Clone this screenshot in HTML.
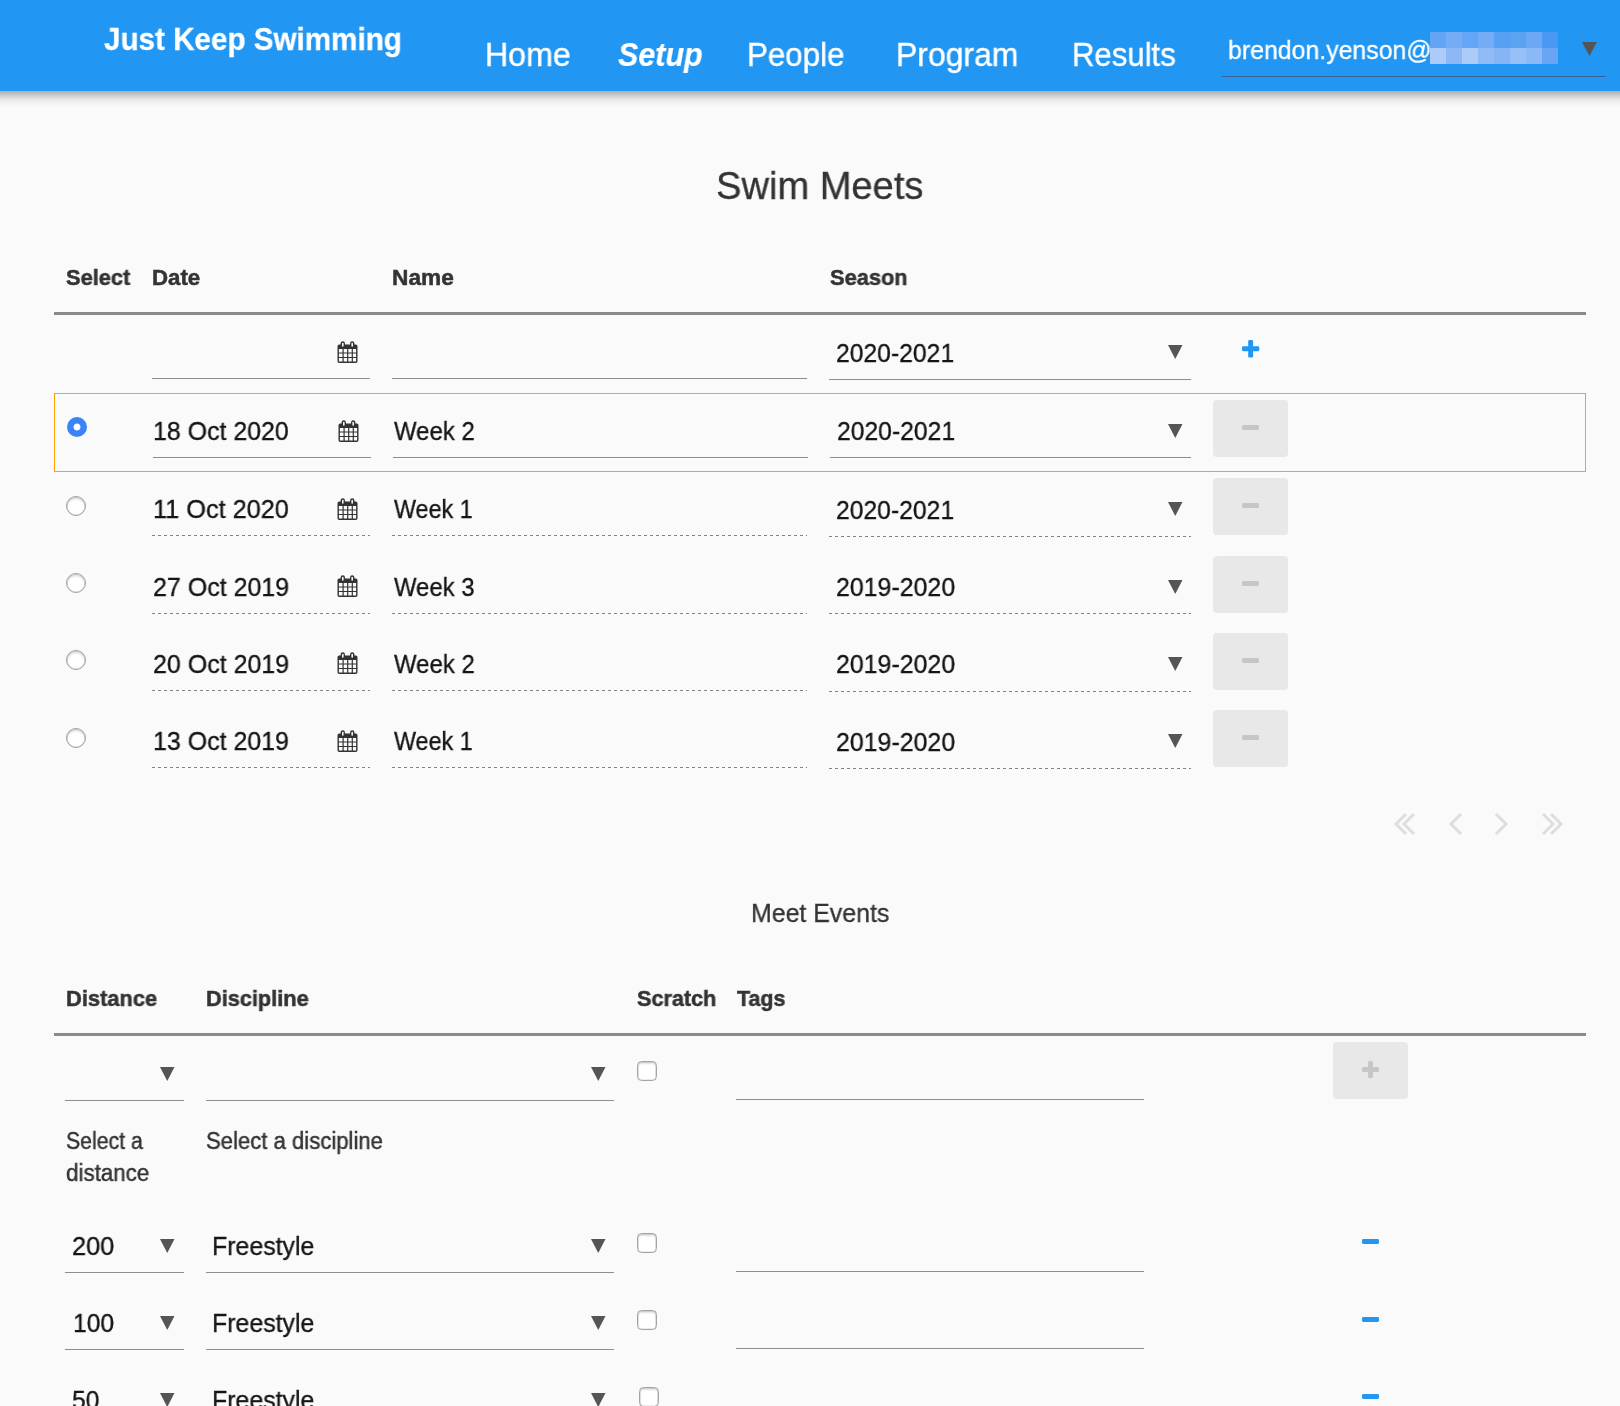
<!DOCTYPE html>
<html lang="en">
<head>
<meta charset="utf-8">
<title>Just Keep Swimming - Setup</title>
<style>
*{box-sizing:border-box;margin:0;padding:0}
html,body{width:1620px;height:1406px;overflow:hidden;background:#fafafa}
body{position:relative;font-family:"Liberation Sans",Arial,sans-serif;color:#212121}
.t,.ul,.dl,.hl,.btn,.rad,.chk,.minus,.sel,svg{position:absolute}
.t{white-space:nowrap;line-height:1;font-weight:normal;font-style:normal;transform-origin:0 0;will-change:transform}
header{position:absolute;left:0;top:0;width:1620px;height:91px;background:#2196f3;}
.shadow{position:absolute;left:0;top:91px;width:1620px;height:17px;background:linear-gradient(rgba(0,0,0,.275) 0,rgba(0,0,0,.27) 1.5px,rgba(0,0,0,.24) 2.5px,rgba(0,0,0,.176) 4.5px,rgba(0,0,0,.128) 6.5px,rgba(0,0,0,.08) 8.5px,rgba(0,0,0,.048) 10.5px,rgba(0,0,0,.028) 12.5px,rgba(0,0,0,.012) 14.5px,rgba(0,0,0,0) 17px)}
header .t{color:#fff;text-decoration:none}
.user{-webkit-text-stroke:.3px #fff}
.brand{-webkit-text-stroke:.3px #fff}
.brand{font-weight:bold}
nav a{-webkit-text-stroke:.4px #fff}
nav a.act{font-weight:bold;font-style:italic;-webkit-text-stroke:.2px #fff}
.px i{position:absolute;width:16px;height:16px}
.ul{height:1px;background:#8e8e8e}
.dl{height:1px;background:repeating-linear-gradient(90deg,#838383 0 3px,transparent 3px 6px)}
.hl{left:54px;width:1532px;height:3px;background:#8a8a8a}
h1.t,h2.t{color:#333;-webkit-text-stroke:.3px #333}
.th{font-weight:bold;color:#333;-webkit-text-stroke:.5px #333}
.td{color:#151515;-webkit-text-stroke:.35px #151515}
.hint{color:#333;-webkit-text-stroke:.45px #333}
.sel{left:54px;top:393px;width:1532px;height:79px;border:1px solid #ffa000}
.btn{width:75px;height:57px;background:#e8e8e8;border-radius:4px}
.btn i{position:absolute;left:29px;top:25px;width:17px;height:5px;border-radius:1.4px;background:#c6c6c6}
.btn b{position:absolute;left:35px;top:18px;width:5px;height:17px;border-radius:2px;background:#c6c6c6}
.btn.plus i{top:25px;border-radius:1.5px}
.btn.plus b{top:19px;border-radius:1.5px}
.rad{width:20px;height:20px;border-radius:50%;border:1px solid #a2a2a2;background:#fff;box-shadow:inset 0 0 0 .6px rgba(0,0,0,.18),inset 0 2px 2px rgba(0,0,0,.14)}
.rad.on{border:none;box-shadow:none;background:radial-gradient(circle at 50% 50%,#fff 0,#fff 3px,#3a84f7 3.9px)}
.chk{width:20px;height:20px;border:1px solid #a4a4a4;border-radius:4.5px;background:#fff;box-shadow:inset 0 0 0 .6px rgba(0,0,0,.16),inset 0 2px 2px rgba(0,0,0,.13)}
.minus{width:17px;height:5px;border-radius:1.4px;background:#2196f3}
svg{overflow:visible}
</style>
</head>
<body>
<header>
<div id="brand" class="t brand" style="left:103.93px;top:23.00px;font-size:32.2px;transform:scaleX(0.9201)">Just Keep Swimming</div>
<nav>
<a id="n1" class="t" style="left:484.61px;top:38.00px;font-size:33.4px;transform:scaleX(0.9621)">Home</a>
<a id="n2" class="t act" style="left:618.36px;top:38.00px;font-size:33.4px;transform:scaleX(0.9132)">Setup</a>
<a id="n3" class="t" style="left:746.90px;top:38.00px;font-size:33.4px;transform:scaleX(0.9365)">People</a>
<a id="n4" class="t" style="left:896.09px;top:38.00px;font-size:33.4px;transform:scaleX(0.9557)">Program</a>
<a id="n5" class="t" style="left:1071.53px;top:38.00px;font-size:33.4px;transform:scaleX(0.9313)">Results</a>
</nav>
<div class="userbox">
<div id="user" class="t user" style="left:1228.07px;top:37.00px;font-size:26.4px;transform:scaleX(0.9421)">brendon.yenson@</div>
<div class="px"><i style="left:1430px;top:32px;background:#64a4f4"></i><i style="left:1446px;top:32px;background:#74adf5"></i><i style="left:1462px;top:32px;background:#64a5f5"></i><i style="left:1478px;top:32px;background:#74adf6"></i><i style="left:1494px;top:32px;background:#58a0f3"></i><i style="left:1510px;top:32px;background:#5ca2f3"></i><i style="left:1526px;top:32px;background:#6ca9f5"></i><i style="left:1542px;top:32px;background:#4a98f3"></i><i style="left:1430px;top:48px;background:#accbf9"></i><i style="left:1446px;top:48px;background:#8cb8f7"></i><i style="left:1462px;top:48px;background:#abcbf9"></i><i style="left:1478px;top:48px;background:#90bbf7"></i><i style="left:1494px;top:48px;background:#86b5f6"></i><i style="left:1510px;top:48px;background:#98c0f8"></i><i style="left:1526px;top:48px;background:#8bb8f6"></i><i style="left:1542px;top:48px;background:#68a6f5"></i></div>
<div class="ul" style="left:1222px;top:76px;width:384px;background:#35618f"></div>
<svg style="left:1582px;top:42px" width="15" height="14" viewBox="0 0 15 14"><path d="M0 0h15L7.5 14z" fill="#555"/></svg>
</div>
</header>
<div class="shadow"></div>
<main>
<section class="meets">
<h1 id="h1" class="t" style="left:716.42px;top:166.00px;font-size:39.2px;transform:scaleX(0.9721)">Swim Meets</h1>
<div class="thead">
<div id="th1" class="t th" style="left:65.55px;top:267.00px;font-size:22px;transform:scaleX(0.9905)">Select</div>
<div id="th2" class="t th" style="left:151.92px;top:267.00px;font-size:22px;transform:scaleX(1.0102)">Date</div>
<div id="th3" class="t th" style="left:391.92px;top:267.00px;font-size:22px;transform:scaleX(1.0307)">Name</div>
<div id="th4" class="t th" style="left:829.70px;top:267.00px;font-size:22px;transform:scaleX(0.9916)">Season</div>
<div class="hl" style="top:312px"></div>
</div>
<div class="row" id="new">
<div id="news" class="t td" style="left:835.57px;top:340.00px;font-size:26.6px;transform:scaleX(0.9289)">2020-2021</div>
<svg class="cal" style="left:336.6px;top:341px" width="21" height="22" viewBox="0 0 21 22"><path fill="#333" fill-rule="evenodd" d="M2.2 3.6h16.6a1.7 1.7 0 0 1 1.7 1.7v15a1.7 1.7 0 0 1-1.7 1.7H2.2a1.7 1.7 0 0 1-1.7-1.7v-15a1.7 1.7 0 0 1 1.7-1.7zM1.9 8.1h3.6v3.3H1.9zM6.7 8.1h3.4v3.3H6.7zM11.3 8.1h3.4v3.3h-3.4zM15.9 8.1h3.2v3.3h-3.2zM1.9 12.5h3.6v3.4H1.9zM6.7 12.5h3.4v3.4H6.7zM11.3 12.5h3.4v3.4h-3.4zM15.9 12.5h3.2v3.4h-3.2zM1.9 17h3.6v3.5H1.9zM6.7 17h3.4v3.5H6.7zM11.3 17h3.4v3.5h-3.4zM15.9 17h3.2v3.5h-3.2z"/><rect x="3.6" y="0.3" width="4.4" height="6.6" rx="2.2" fill="#333"/><rect x="13" y="0.3" width="4.4" height="6.6" rx="2.2" fill="#333"/><rect x="5" y="1.8" width="1.6" height="3.9" rx=".8" fill="#fafafa"/><rect x="14.4" y="1.8" width="1.6" height="3.9" rx=".8" fill="#fafafa"/></svg>
<div class="ul" style="left:152px;top:378px;width:218px"></div>
<div class="ul" style="left:392px;top:378px;width:415px"></div>
<div class="ul" style="left:829px;top:379px;width:362px"></div>
<svg class="arr" style="left:1167.5px;top:345px" width="14.5" height="14" viewBox="0 0 14.5 14"><path d="M0 0h14.5L7.25 14z" fill="#555"/></svg>
<svg class="plus" style="left:1242px;top:340.4px" width="17.3" height="17.6" viewBox="0 0 17.3 17.6"><rect x="0" y="6.35" width="17.3" height="4.9" rx="1.4" fill="#2196f3"/><rect x="6.2" y="0" width="4.9" height="17.6" rx="1.4" fill="#2196f3"/></svg>
</div>
<div class="row" id="r2">
<div class="sel"></div>
<div class="rad on" style="left:67px;top:417px"></div>
<div id="r2d" class="t td" style="left:153.47px;top:418.00px;font-size:26.6px;transform:scaleX(0.9370)">18 Oct 2020</div>
<div id="r2n" class="t td" style="left:394.31px;top:418.00px;font-size:26.6px;transform:scaleX(0.8996)">Week 2</div>
<div id="r2s" class="t td" style="left:836.87px;top:418.00px;font-size:26.6px;transform:scaleX(0.9288)">2020-2021</div>
<svg class="cal" style="left:337.6px;top:420px" width="21" height="22" viewBox="0 0 21 22"><path fill="#333" fill-rule="evenodd" d="M2.2 3.6h16.6a1.7 1.7 0 0 1 1.7 1.7v15a1.7 1.7 0 0 1-1.7 1.7H2.2a1.7 1.7 0 0 1-1.7-1.7v-15a1.7 1.7 0 0 1 1.7-1.7zM1.9 8.1h3.6v3.3H1.9zM6.7 8.1h3.4v3.3H6.7zM11.3 8.1h3.4v3.3h-3.4zM15.9 8.1h3.2v3.3h-3.2zM1.9 12.5h3.6v3.4H1.9zM6.7 12.5h3.4v3.4H6.7zM11.3 12.5h3.4v3.4h-3.4zM15.9 12.5h3.2v3.4h-3.2zM1.9 17h3.6v3.5H1.9zM6.7 17h3.4v3.5H6.7zM11.3 17h3.4v3.5h-3.4zM15.9 17h3.2v3.5h-3.2z"/><rect x="3.6" y="0.3" width="4.4" height="6.6" rx="2.2" fill="#333"/><rect x="13" y="0.3" width="4.4" height="6.6" rx="2.2" fill="#333"/><rect x="5" y="1.8" width="1.6" height="3.9" rx=".8" fill="#fafafa"/><rect x="14.4" y="1.8" width="1.6" height="3.9" rx=".8" fill="#fafafa"/></svg>
<div class="ul" style="left:153px;top:457px;width:218px"></div>
<div class="ul" style="left:393px;top:457px;width:415px"></div>
<div class="ul" style="left:830px;top:457px;width:361px"></div>
<svg class="arr" style="left:1167.5px;top:424px" width="14.5" height="14" viewBox="0 0 14.5 14"><path d="M0 0h14.5L7.25 14z" fill="#555"/></svg>
<div class="btn" style="left:1213px;top:400px"><i></i></div>
</div>
<div class="row" id="r3">
<div class="rad" style="left:66px;top:496px"></div>
<div id="r3d" class="t td" style="left:152.53px;top:496.00px;font-size:26.6px;transform:scaleX(0.9510)">11 Oct 2020</div>
<div id="r3n" class="t td" style="left:393.52px;top:496.00px;font-size:26.6px;transform:scaleX(0.8761)">Week 1</div>
<div id="r3s" class="t td" style="left:835.57px;top:497.00px;font-size:26.6px;transform:scaleX(0.9289)">2020-2021</div>
<svg class="cal" style="left:336.6px;top:498px" width="21" height="22" viewBox="0 0 21 22"><path fill="#333" fill-rule="evenodd" d="M2.2 3.6h16.6a1.7 1.7 0 0 1 1.7 1.7v15a1.7 1.7 0 0 1-1.7 1.7H2.2a1.7 1.7 0 0 1-1.7-1.7v-15a1.7 1.7 0 0 1 1.7-1.7zM1.9 8.1h3.6v3.3H1.9zM6.7 8.1h3.4v3.3H6.7zM11.3 8.1h3.4v3.3h-3.4zM15.9 8.1h3.2v3.3h-3.2zM1.9 12.5h3.6v3.4H1.9zM6.7 12.5h3.4v3.4H6.7zM11.3 12.5h3.4v3.4h-3.4zM15.9 12.5h3.2v3.4h-3.2zM1.9 17h3.6v3.5H1.9zM6.7 17h3.4v3.5H6.7zM11.3 17h3.4v3.5h-3.4zM15.9 17h3.2v3.5h-3.2z"/><rect x="3.6" y="0.3" width="4.4" height="6.6" rx="2.2" fill="#333"/><rect x="13" y="0.3" width="4.4" height="6.6" rx="2.2" fill="#333"/><rect x="5" y="1.8" width="1.6" height="3.9" rx=".8" fill="#fafafa"/><rect x="14.4" y="1.8" width="1.6" height="3.9" rx=".8" fill="#fafafa"/></svg>
<div class="dl" style="left:152px;top:535px;width:218px"></div>
<div class="dl" style="left:392px;top:535px;width:415px"></div>
<div class="dl" style="left:829px;top:536px;width:362px"></div>
<svg class="arr" style="left:1167.5px;top:502px" width="14.5" height="14" viewBox="0 0 14.5 14"><path d="M0 0h14.5L7.25 14z" fill="#555"/></svg>
<div class="btn" style="left:1213px;top:478px"><i></i></div>
</div>
<div class="row" id="r4">
<div class="rad" style="left:66px;top:573px"></div>
<div id="r4d" class="t td" style="left:152.67px;top:574.00px;font-size:26.6px;transform:scaleX(0.9399)">27 Oct 2019</div>
<div id="r4n" class="t td" style="left:393.91px;top:574.00px;font-size:26.6px;transform:scaleX(0.8970)">Week 3</div>
<div id="r4s" class="t td" style="left:836.06px;top:574.00px;font-size:26.6px;transform:scaleX(0.9369)">2019-2020</div>
<svg class="cal" style="left:336.6px;top:575.1px" width="21" height="22" viewBox="0 0 21 22"><path fill="#333" fill-rule="evenodd" d="M2.2 3.6h16.6a1.7 1.7 0 0 1 1.7 1.7v15a1.7 1.7 0 0 1-1.7 1.7H2.2a1.7 1.7 0 0 1-1.7-1.7v-15a1.7 1.7 0 0 1 1.7-1.7zM1.9 8.1h3.6v3.3H1.9zM6.7 8.1h3.4v3.3H6.7zM11.3 8.1h3.4v3.3h-3.4zM15.9 8.1h3.2v3.3h-3.2zM1.9 12.5h3.6v3.4H1.9zM6.7 12.5h3.4v3.4H6.7zM11.3 12.5h3.4v3.4h-3.4zM15.9 12.5h3.2v3.4h-3.2zM1.9 17h3.6v3.5H1.9zM6.7 17h3.4v3.5H6.7zM11.3 17h3.4v3.5h-3.4zM15.9 17h3.2v3.5h-3.2z"/><rect x="3.6" y="0.3" width="4.4" height="6.6" rx="2.2" fill="#333"/><rect x="13" y="0.3" width="4.4" height="6.6" rx="2.2" fill="#333"/><rect x="5" y="1.8" width="1.6" height="3.9" rx=".8" fill="#fafafa"/><rect x="14.4" y="1.8" width="1.6" height="3.9" rx=".8" fill="#fafafa"/></svg>
<div class="dl" style="left:152px;top:613px;width:218px"></div>
<div class="dl" style="left:392px;top:613px;width:415px"></div>
<div class="dl" style="left:829px;top:613px;width:362px"></div>
<svg class="arr" style="left:1167.5px;top:580px" width="14.5" height="14" viewBox="0 0 14.5 14"><path d="M0 0h14.5L7.25 14z" fill="#555"/></svg>
<div class="btn" style="left:1213px;top:556px"><i></i></div>
</div>
<div class="row" id="r5">
<div class="rad" style="left:66px;top:650px"></div>
<div id="r5d" class="t td" style="left:152.67px;top:651.00px;font-size:26.6px;transform:scaleX(0.9399)">20 Oct 2019</div>
<div id="r5n" class="t td" style="left:393.95px;top:651.00px;font-size:26.6px;transform:scaleX(0.8999)">Week 2</div>
<div id="r5s" class="t td" style="left:836.06px;top:651.00px;font-size:26.6px;transform:scaleX(0.9369)">2019-2020</div>
<svg class="cal" style="left:336.6px;top:652.4px" width="21" height="22" viewBox="0 0 21 22"><path fill="#333" fill-rule="evenodd" d="M2.2 3.6h16.6a1.7 1.7 0 0 1 1.7 1.7v15a1.7 1.7 0 0 1-1.7 1.7H2.2a1.7 1.7 0 0 1-1.7-1.7v-15a1.7 1.7 0 0 1 1.7-1.7zM1.9 8.1h3.6v3.3H1.9zM6.7 8.1h3.4v3.3H6.7zM11.3 8.1h3.4v3.3h-3.4zM15.9 8.1h3.2v3.3h-3.2zM1.9 12.5h3.6v3.4H1.9zM6.7 12.5h3.4v3.4H6.7zM11.3 12.5h3.4v3.4h-3.4zM15.9 12.5h3.2v3.4h-3.2zM1.9 17h3.6v3.5H1.9zM6.7 17h3.4v3.5H6.7zM11.3 17h3.4v3.5h-3.4zM15.9 17h3.2v3.5h-3.2z"/><rect x="3.6" y="0.3" width="4.4" height="6.6" rx="2.2" fill="#333"/><rect x="13" y="0.3" width="4.4" height="6.6" rx="2.2" fill="#333"/><rect x="5" y="1.8" width="1.6" height="3.9" rx=".8" fill="#fafafa"/><rect x="14.4" y="1.8" width="1.6" height="3.9" rx=".8" fill="#fafafa"/></svg>
<div class="dl" style="left:152px;top:690px;width:218px"></div>
<div class="dl" style="left:392px;top:690px;width:415px"></div>
<div class="dl" style="left:829px;top:691px;width:362px"></div>
<svg class="arr" style="left:1167.5px;top:657px" width="14.5" height="14" viewBox="0 0 14.5 14"><path d="M0 0h14.5L7.25 14z" fill="#555"/></svg>
<div class="btn" style="left:1213px;top:633px"><i></i></div>
</div>
<div class="row" id="r6">
<div class="rad" style="left:66px;top:728px"></div>
<div id="r6d" class="t td" style="left:152.64px;top:728.00px;font-size:26.6px;transform:scaleX(0.9385)">13 Oct 2019</div>
<div id="r6n" class="t td" style="left:393.52px;top:728.00px;font-size:26.6px;transform:scaleX(0.8761)">Week 1</div>
<div id="r6s" class="t td" style="left:836.06px;top:729.00px;font-size:26.6px;transform:scaleX(0.9369)">2019-2020</div>
<svg class="cal" style="left:336.6px;top:729.6px" width="21" height="22" viewBox="0 0 21 22"><path fill="#333" fill-rule="evenodd" d="M2.2 3.6h16.6a1.7 1.7 0 0 1 1.7 1.7v15a1.7 1.7 0 0 1-1.7 1.7H2.2a1.7 1.7 0 0 1-1.7-1.7v-15a1.7 1.7 0 0 1 1.7-1.7zM1.9 8.1h3.6v3.3H1.9zM6.7 8.1h3.4v3.3H6.7zM11.3 8.1h3.4v3.3h-3.4zM15.9 8.1h3.2v3.3h-3.2zM1.9 12.5h3.6v3.4H1.9zM6.7 12.5h3.4v3.4H6.7zM11.3 12.5h3.4v3.4h-3.4zM15.9 12.5h3.2v3.4h-3.2zM1.9 17h3.6v3.5H1.9zM6.7 17h3.4v3.5H6.7zM11.3 17h3.4v3.5h-3.4zM15.9 17h3.2v3.5h-3.2z"/><rect x="3.6" y="0.3" width="4.4" height="6.6" rx="2.2" fill="#333"/><rect x="13" y="0.3" width="4.4" height="6.6" rx="2.2" fill="#333"/><rect x="5" y="1.8" width="1.6" height="3.9" rx=".8" fill="#fafafa"/><rect x="14.4" y="1.8" width="1.6" height="3.9" rx=".8" fill="#fafafa"/></svg>
<div class="dl" style="left:152px;top:767px;width:218px"></div>
<div class="dl" style="left:392px;top:767px;width:415px"></div>
<div class="dl" style="left:829px;top:768px;width:362px"></div>
<svg class="arr" style="left:1167.5px;top:734px" width="14.5" height="14" viewBox="0 0 14.5 14"><path d="M0 0h14.5L7.25 14z" fill="#555"/></svg>
<div class="btn" style="left:1213px;top:710px"><i></i></div>
</div>
<div class="pager">
<svg style="left:1394px;top:813px" width="22" height="22" viewBox="0 0 22 22"><path d="M12 1L2 11l10 10M20 1L10 11l10 10" stroke="#dedede" stroke-width="3" fill="none"/></svg>
<svg style="left:1448.5px;top:813px" width="22" height="22" viewBox="0 0 22 22"><path d="M12 1L2 11l10 10" stroke="#dedede" stroke-width="3" fill="none"/></svg>
<svg style="left:1494px;top:813px" width="22" height="22" viewBox="0 0 22 22"><path d="M2 1l10 10L2 21" stroke="#dedede" stroke-width="3" fill="none"/></svg>
<svg style="left:1541px;top:813px" width="22" height="22" viewBox="0 0 22 22"><path d="M2 1l10 10L2 21M10 1l10 10-10 10" stroke="#dedede" stroke-width="3" fill="none"/></svg>
</div>
</section>
<section class="events">
<h2 id="h2" class="t" style="left:750.85px;top:900.00px;font-size:26.4px;transform:scaleX(0.9432)">Meet Events</h2>
<div class="thead">
<div id="e1" class="t th" style="left:65.79px;top:988.00px;font-size:22px;transform:scaleX(0.9935)">Distance</div>
<div id="e2" class="t th" style="left:205.77px;top:988.00px;font-size:22px;transform:scaleX(0.9872)">Discipline</div>
<div id="e3" class="t th" style="left:636.96px;top:988.00px;font-size:22px;transform:scaleX(0.9820)">Scratch</div>
<div id="e4" class="t th" style="left:737.05px;top:988.00px;font-size:22px;transform:scaleX(0.9735)">Tags</div>
<div class="hl" style="top:1033px"></div>
</div>
<div class="row" id="en">
<div class="ul" style="left:65px;top:1100px;width:119px"></div>
<svg class="arr" style="left:160px;top:1066.5px" width="14.5" height="14" viewBox="0 0 14.5 14"><path d="M0 0h14.5L7.25 14z" fill="#555"/></svg>
<div class="ul" style="left:206px;top:1100px;width:408px"></div>
<svg class="arr" style="left:591px;top:1066.5px" width="14.5" height="14" viewBox="0 0 14.5 14"><path d="M0 0h14.5L7.25 14z" fill="#555"/></svg>
<div class="chk" style="left:637px;top:1061px"></div>
<div class="ul" style="left:736px;top:1099px;width:408px"></div>
<div class="btn plus" style="left:1333px;top:1042px"><i></i><b></b></div>
<div id="hi1" class="t hint" style="left:65.71px;top:1130.00px;font-size:23px;transform:scaleX(0.9245)">Select a</div>
<div id="hi2" class="t hint" style="left:65.52px;top:1162.00px;font-size:23px;transform:scaleX(0.9733)">distance</div>
<div id="hi3" class="t hint" style="left:205.52px;top:1130.00px;font-size:23px;transform:scaleX(0.9609)">Select a discipline</div>
</div>
<div class="row" id="ea">
<div class="ul" style="left:65px;top:1272px;width:119px"></div>
<svg class="arr" style="left:160px;top:1238.5px" width="14.5" height="14" viewBox="0 0 14.5 14"><path d="M0 0h14.5L7.25 14z" fill="#555"/></svg>
<div class="ul" style="left:206px;top:1272px;width:408px"></div>
<svg class="arr" style="left:591px;top:1238.5px" width="14.5" height="14" viewBox="0 0 14.5 14"><path d="M0 0h14.5L7.25 14z" fill="#555"/></svg>
<div class="chk" style="left:637px;top:1233px"></div>
<div class="ul" style="left:736px;top:1271px;width:408px"></div>
<div id="eaa" class="t td" style="left:71.95px;top:1233.00px;font-size:26.6px;transform:scaleX(0.9550)">200</div>
<div id="eab" class="t td" style="left:211.81px;top:1233.00px;font-size:26.6px;transform:scaleX(0.9355)">Freestyle</div>
<div class="minus" style="left:1362px;top:1239px"></div>
</div>
<div class="row" id="eb">
<div class="ul" style="left:65px;top:1349px;width:119px"></div>
<svg class="arr" style="left:160px;top:1315.5px" width="14.5" height="14" viewBox="0 0 14.5 14"><path d="M0 0h14.5L7.25 14z" fill="#555"/></svg>
<div class="ul" style="left:206px;top:1349px;width:408px"></div>
<svg class="arr" style="left:591px;top:1315.5px" width="14.5" height="14" viewBox="0 0 14.5 14"><path d="M0 0h14.5L7.25 14z" fill="#555"/></svg>
<div class="chk" style="left:637px;top:1310px"></div>
<div class="ul" style="left:736px;top:1348px;width:408px"></div>
<div id="eba" class="t td" style="left:72.88px;top:1310.00px;font-size:26.6px;transform:scaleX(0.9287)">100</div>
<div id="ebb" class="t td" style="left:211.81px;top:1310.00px;font-size:26.6px;transform:scaleX(0.9355)">Freestyle</div>
<div class="minus" style="left:1362px;top:1317px"></div>
</div>
<div class="row" id="ec">
<div class="ul" style="left:65px;top:1426px;width:119px"></div>
<svg class="arr" style="left:160px;top:1392.5px" width="14.5" height="14" viewBox="0 0 14.5 14"><path d="M0 0h14.5L7.25 14z" fill="#555"/></svg>
<div class="ul" style="left:206px;top:1426px;width:408px"></div>
<svg class="arr" style="left:591px;top:1392.5px" width="14.5" height="14" viewBox="0 0 14.5 14"><path d="M0 0h14.5L7.25 14z" fill="#555"/></svg>
<div class="chk" style="left:639px;top:1387px"></div>
<div class="ul" style="left:736px;top:1425px;width:408px"></div>
<div id="eca" class="t td" style="left:72.34px;top:1387.00px;font-size:26.6px;transform:scaleX(0.9270)">50</div>
<div id="ecb" class="t td" style="left:211.81px;top:1387.00px;font-size:26.6px;transform:scaleX(0.9355)">Freestyle</div>
<div class="minus" style="left:1362px;top:1394px"></div>
</div>
</section>
</main>
</body>
</html>
